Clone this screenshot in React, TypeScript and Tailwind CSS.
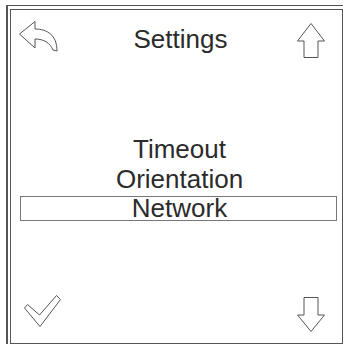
const ITEMS = ["Timeout", "Orientation"];

const BackIcon = () => (
  <svg width="40" height="33" viewBox="0 0 40 33" className="ml-[8px] shrink-0">
    <path
      d="M0.5 13 L16 0.5 V8 C28 8 38 14 38 30 L34 29 C31 22 25 18 16 18 V27 Z"
      fill="white"
      stroke="#555"
      strokeWidth="1"
      strokeLinejoin="round"
    />
  </svg>
);

const UpIcon = () => (
  <svg width="28" height="35" viewBox="0 0 28 35" className="mt-[2px] mr-[17px] shrink-0">
    <path d="M14 0.5 L0.5 18 H7 V34.5 H21 V18 H27.5 Z" fill="white" stroke="#555" strokeWidth="1" />
  </svg>
);

const DownIcon = () => (
  <svg width="28" height="35" viewBox="0 0 28 35" className="mr-[17px] shrink-0">
    <path d="M7 0.5 H21 V18 H27.5 L14 34.5 L0.5 18 H7 Z" fill="white" stroke="#555" strokeWidth="1" />
  </svg>
);

const CheckIcon = () => (
  <svg width="37" height="33" viewBox="0 0 37 33" className="ml-[13px] mb-[4px] shrink-0">
    <path
      d="M0.5 13 L3.5 9.5 L15.5 20 L32.5 0.5 L36.5 4.5 L16 31.5 Z"
      fill="white"
      stroke="#555"
      strokeWidth="1"
      strokeLinejoin="round"
    />
  </svg>
);

const App = () => {
  return (
    <div
      className="w-[344px] h-[345px] bg-white text-[#2b2b2b] overflow-hidden"
      style={{ fontFamily: '"Liberation Sans", Arial, sans-serif' }}
    >
      <div className="ml-[6px] mt-[5px] w-[337px] h-[339px] border-t border-l-2 border-[#555] pt-[3px] pl-[2px]">
        <div className="h-full border border-[#555] flex flex-col">
          {/* header */}
          <div className="flex items-start pt-[11px]">
            <BackIcon />
            <div className="flex-1 text-center pl-[5px] mt-[3px] text-[26px] leading-[30px]">Settings</div>
            <UpIcon />
          </div>

          {/* menu */}
          <div className="mt-[76px] flex flex-col text-[26px]">
            {ITEMS.map((item) => (
              <div key={item} className="text-center pl-[6px] leading-[30px]">
                {item}
              </div>
            ))}
            <div className="mt-[2px] ml-[9px] mr-[5px] border border-[#777] text-center pl-[2px] leading-[23px]">
              Network
            </div>
          </div>

          {/* footer */}
          <div className="mt-auto flex justify-between items-end pb-[11px]">
            <CheckIcon />
            <DownIcon />
          </div>
        </div>
      </div>
    </div>
  );
};

export default App;
